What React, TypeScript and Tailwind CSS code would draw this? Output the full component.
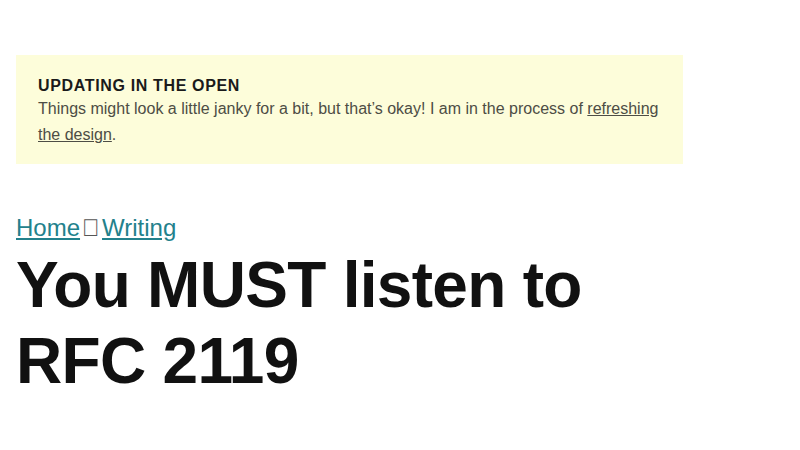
import React from 'react';

const font = { fontFamily: '"Liberation Sans", Arial, sans-serif' };

export default function App() {
    return (
        <div className="min-h-[450px] bg-white px-4 pt-[55px]" style={font}>
            {/* Notice banner */}
            <div className="w-[667px] bg-[#fdfdda] pl-[22px] pr-[20px] pt-[21px] pb-[16px]">
                <p className="text-[16px] leading-[20px] font-bold uppercase tracking-[0.65px] text-[#1a1a1a]">
                    Updating in the open
                </p>
                <p className="text-[16px] leading-[26px] text-[#4d4d45]">
                    Things might look a little janky for a bit, but that’s okay! I am in the process of{' '}
                    <a href="#" className="underline">refreshing the design</a>.
                </p>
            </div>

            {/* Breadcrumbs */}
            <nav className="mt-[46px] text-[24px] leading-[36px]">
                <a href="#" className="text-[#23818c] underline">Home</a>
                <span className="text-[#555] mx-[2px]">{'\uf105'}</span>
                <a href="#" className="text-[#23818c] underline">Writing</a>
            </nav>

            {/* Title */}
            <h1 className="mt-[1px] text-[64px] leading-[76px] font-bold tracking-[-0.7px] text-[#111] w-[640px]">
                You MUST listen to RFC 2119
            </h1>
        </div>
    );
}
